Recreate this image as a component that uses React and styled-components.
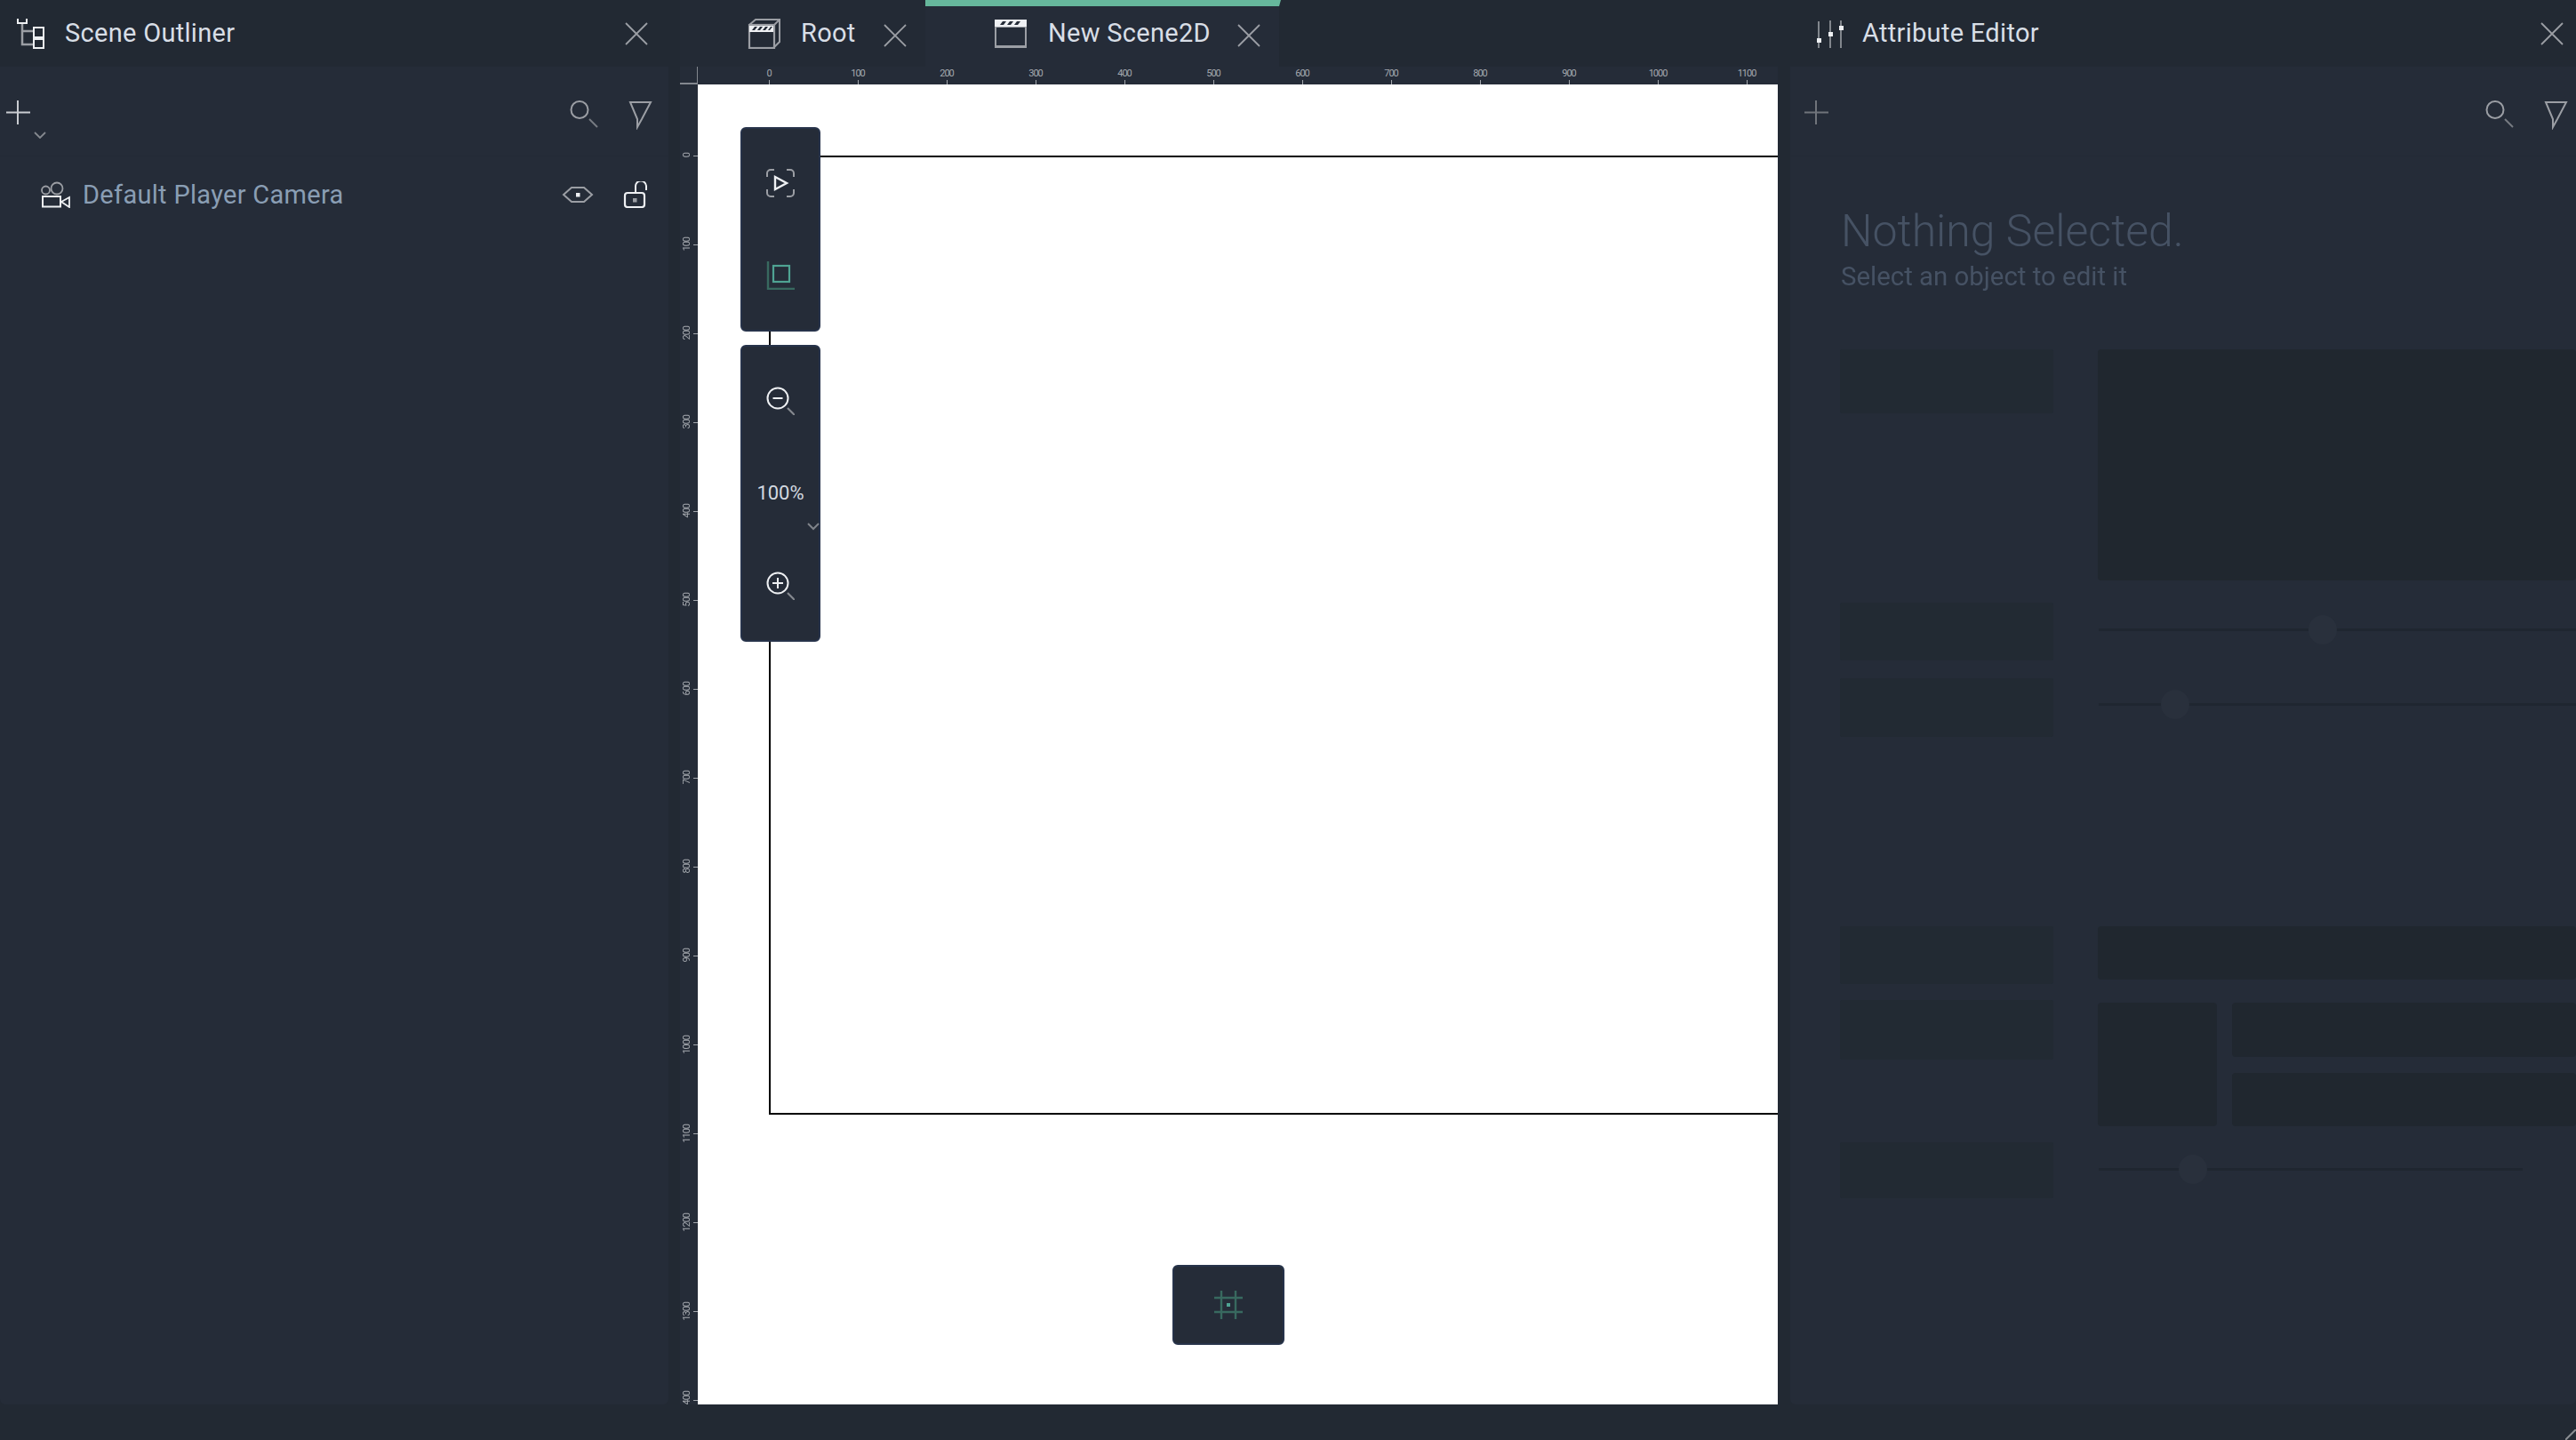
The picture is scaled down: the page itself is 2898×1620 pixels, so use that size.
import React from "react";
import styled, { createGlobalStyle } from "styled-components";

const Global = createGlobalStyle`
  html, body { margin: 0; padding: 0; width: 2898px; height: 1620px; overflow: hidden; background: #222933; }
  * { box-sizing: border-box; }
  body { font-family: Roboto, "Liberation Sans", sans-serif; }
`;

const Page = styled.div`
  width: 2898px;
  height: 1620px;
  display: flex;
  flex-direction: column;
  background: #222933;
`;
const Main = styled.div`
  height: 1580px;
  display: flex;
  gap: 0;
`;
const SidePanel = styled.section`
  width: ${(p) => p.$width}px;
  margin-right: ${(p) => p.$after || 0}px;
  flex: none;
  display: flex;
  flex-direction: column;
  overflow: hidden;
`;
const PanelHeader = styled.header`
  height: 75px;
  flex: none;
  display: flex;
  align-items: center;
  padding-left: ${(p) => p.$left}px;
  padding-right: ${(p) => p.$right}px;
  background: #222933;
`;
const PanelTitle = styled.h2`
  margin: 0 0 0 ${(p) => p.$gap}px;
  font: 400 29px/33px Roboto, sans-serif;
  letter-spacing: 0.3px;
  color: #d8dee6;
  position: relative;
  top: 0;
`;
const PanelBody = styled.div`
  flex: 1;
  display: flex;
  flex-direction: column;
  background: #252c38;
  border-radius: 0 0 6px 6px;
  overflow: hidden;
`;
const Toolbar = styled.div`
  height: 101px;
  flex: none;
  display: flex;
  align-items: flex-start;
  padding: 37px ${(p) => p.$right}px 0 ${(p) => p.$left}px;
  border-bottom: 1px solid #232a35;
`;
const ToolbarRight = styled.div`
  margin-left: auto;
  display: flex;
  gap: 32px;
`;
const Glyph = styled.svg`
  display: block;
  flex: none;
  fill: none;
`;
const CloseGlyph = styled(Glyph)`
  margin-left: auto;
  position: relative;
  top: ${(p) => p.$top || 0}px;
`;
const OutlinerRow = styled.div`
  display: flex;
  align-items: center;
  height: 30px;
  margin-top: 28px;
  padding: 0 22px 0 46px;
`;
const RowLabel = styled.span`
  margin-left: 13px;
  font: 400 29px/30px Roboto, sans-serif;
  letter-spacing: 0.3px;
  color: #8a9eb4;
`;
const RowActions = styled.div`
  margin-left: auto;
  display: flex;
  align-items: center;
  gap: 32px;
`;

const CenterColumn = styled.section`
  width: 1235px;
  margin-left: 13px;
  margin-right: 14px;
  flex: none;
  display: flex;
  flex-direction: column;
`;
const TabStrip = styled.nav`
  height: 75px;
  flex: none;
  display: flex;
`;
const Tab = styled.div`
  position: relative;
  width: ${(p) => p.$width}px;
  display: flex;
  align-items: center;
  padding: 0 21px 0 ${(p) => p.$left}px;
  background: ${(p) => (p.$active ? "#252c38" : "#232a35")};
`;
const TabMarker = styled.span`
  position: absolute;
  left: 0;
  top: 0;
  width: 400px;
  height: 7px;
  background: #66b79c;
  clip-path: polygon(0 0, 100% 0, calc(100% - 2px) 100%, 0 100%);
`;
const TabLabel = styled.span`
  margin-left: ${(p) => p.$gap}px;
  font: 400 29px/33px Roboto, sans-serif;
  letter-spacing: 0.3px;
  color: #d8dee6;
`;
const RulerTopRow = styled.div`
  height: 20px;
  flex: none;
  display: flex;
`;
const RulerCorner = styled.div`
  width: 20px;
  height: 20px;
  flex: none;
  background: #252c38;
  border-right: 1px solid #83878f;
  border-bottom: 2px solid #83878f;
`;
const HorizontalRuler = styled.div`
  flex: 1;
  display: flex;
  padding-left: 30px;
  overflow: hidden;
  background: #252c38;
`;
const HCell = styled.div`
  width: 100px;
  height: 20px;
  flex: none;
  display: flex;
  flex-direction: column;
  align-items: center;
`;
const RulerText = styled.span`
  font: 400 11px/15px Roboto, sans-serif;
  letter-spacing: -1px;
  color: #a4a8ae;
  white-space: nowrap;
`;
const HTick = styled.i`
  display: block;
  width: 1px;
  height: 5px;
  background: #a4a8ae;
`;
const Stage = styled.div`
  flex: 1;
  min-height: 0;
  display: flex;
`;
const VerticalRuler = styled.div`
  width: 20px;
  flex: none;
  display: flex;
  flex-direction: column;
  padding-top: 30px;
  overflow: hidden;
  background: #252c38;
`;
const VCell = styled.div`
  height: 100px;
  width: 20px;
  flex: none;
  display: flex;
  align-items: center;
`;
const VText = styled(RulerText)`
  width: 15px;
  display: flex;
  justify-content: center;
  writing-mode: vertical-rl;
  transform: rotate(180deg);
`;
const VTick = styled.i`
  display: block;
  width: 5px;
  height: 1px;
  background: #a4a8ae;
`;
const Canvas = styled.div`
  position: relative;
  flex: 1;
  background: #fff;
  overflow: hidden;
`;
const SceneFrame = styled.div`
  position: absolute;
  left: 80px;
  top: 80px;
  width: 1400px;
  height: 1079px;
  border: 2px solid #000;
`;
const ToolStack = styled.div`
  position: absolute;
  left: 48px;
  top: 48px;
  display: flex;
  flex-direction: column;
  gap: 15px;
`;
const FloatingBar = styled.div`
  width: 90px;
  padding: 9px 0;
  display: flex;
  flex-direction: column;
  background: #252c38;
  border: 2px solid #27334a;
  border-radius: 6px;
`;
const ToolButton = styled.div`
  position: relative;
  height: 104px;
  display: flex;
  align-items: center;
  justify-content: center;
`;
const ZoomValue = styled.span`
  font: 400 22px/26px Roboto, sans-serif;
  color: #d3d9e0;
`;
const ZoomCaret = styled(Glyph)`
  position: absolute;
  left: 73px;
  top: 85px;
`;
const GridButton = styled.div`
  position: absolute;
  left: 534px;
  top: 1328px;
  width: 126px;
  height: 90px;
  display: flex;
  align-items: center;
  justify-content: center;
  background: #252c38;
  border: 2px solid #27334a;
  border-radius: 6px;
`;

const FadedBody = styled.div`
  flex: 1;
  padding-left: 56px;
  filter: blur(0.6px);
`;
const EmptyBlock = styled.div`
  height: 217px;
  padding: 56px 0 0 1px;
`;
const EmptyTitle = styled.div`
  font: 300 50px/56px Roboto, sans-serif;
  color: #465264;
`;
const EmptySub = styled.div`
  margin-top: 6px;
  font: 400 29.4px/34px Roboto, sans-serif;
  color: #465264;
`;
const SkeletonRow = styled.div`
  display: grid;
  grid-template-columns: 240px 538px;
  column-gap: 50px;
  align-items: start;
  margin-top: ${(p) => p.$top || 0}px;
`;
const SkeletonLabel = styled.div`
  height: ${(p) => p.$height}px;
  background: #222a33;
  border-radius: 2px;
`;
const SkeletonBlock = styled.div`
  width: ${(p) => p.$width || "auto"};
  height: ${(p) => p.$height}px;
  background: #20272f;
  border-radius: 4px;
`;
const SliderTrack = styled.div`
  position: relative;
  width: ${(p) => p.$width}px;
  height: 3px;
  margin: ${(p) => p.$top}px 0 0 1px;
  background: #1f2630;
`;
const SliderThumb = styled.div`
  position: absolute;
  left: ${(p) => p.$left}px;
  top: -15px;
  width: 32px;
  height: 33px;
  border-radius: 50%;
  background: #29303c;
`;
const MediaGroup = styled.div`
  display: flex;
  gap: 17px;
  margin-top: 3px;
`;
const MediaBars = styled.div`
  flex: 1;
  display: flex;
  flex-direction: column;
  gap: 18px;
`;
const Footer = styled.footer`
  position: relative;
  height: 40px;
  background: #222933;
`;
const Grip = styled(Glyph)`
  position: absolute;
  right: 0;
  bottom: 0;
`;

const GRAY = "#9b9ea4";
const WHITE = "#eef0f3";

const Close = ({ top }) => (
  <CloseGlyph $top={top} width="26" height="26" viewBox="0 0 26 26">
    <path d="M1 1 25 25M25 1 1 25" stroke={GRAY} strokeWidth="1.8" />
  </CloseGlyph>
);
const OutlinerIcon = () => (
  <Glyph width="32" height="34" viewBox="0 0 32 34">
    <path d="M1 0v5h10V0" stroke={WHITE} strokeWidth="2" />
    <path d="M6 6v23h12M6 14h12" stroke={GRAY} strokeWidth="2.5" />
    <rect x="19" y="10" width="11" height="11" stroke={WHITE} strokeWidth="2" />
    <rect x="19" y="23" width="11" height="10" stroke={WHITE} strokeWidth="2" />
  </Glyph>
);
const SlidersIcon = () => (
  <Glyph width="36" height="34" viewBox="0 0 36 34">
    <path d="M5 3v30M18 2v31M30 2v31" stroke={GRAY} strokeWidth="1.6" />
    <rect x="3" y="22" width="5" height="5" fill={WHITE} />
    <rect x="16" y="15" width="5" height="5" fill={WHITE} />
    <rect x="28" y="8" width="5" height="5" fill={WHITE} />
  </Glyph>
);
const Plus = ({ color, caret }) => (
  <Glyph width="46" height="44" viewBox="0 0 46 44">
    <path d="M14 1v27M1 14.5h27" stroke={color} strokeWidth="2" />
    {caret && <path d="M33 37l6 6 6-6" stroke="#85898f" strokeWidth="1.8" />}
  </Glyph>
);
const Search = () => (
  <Glyph width="34" height="33" viewBox="0 0 34 33">
    <circle cx="12" cy="11.5" r="9.5" stroke={GRAY} strokeWidth="2" />
    <path d="M23 22l9 9" stroke="#777b82" strokeWidth="2" />
  </Glyph>
);
const Filter = () => (
  <Glyph width="30" height="34" viewBox="0 0 30 34">
    <path d="M3 3h23l-10 19-5 9V22z" stroke={GRAY} strokeWidth="2" />
  </Glyph>
);
const CameraIcon = () => (
  <Glyph width="34" height="30" viewBox="0 0 34 30">
    <circle cx="5.5" cy="10" r="4.5" stroke={GRAY} strokeWidth="1.8" />
    <circle cx="18" cy="8" r="6.5" stroke={GRAY} strokeWidth="1.8" />
    <rect x="2" y="17" width="20" height="11.5" stroke={WHITE} strokeWidth="2" />
    <path d="M23 23l9-5v11z" stroke={WHITE} strokeWidth="1.8" />
  </Glyph>
);
const EyeIcon = () => (
  <Glyph width="36" height="22" viewBox="0 0 36 22">
    <path d="M2 11l9-8h14l9 8-9 8H11z" stroke={GRAY} strokeWidth="2" />
    <rect x="16" y="9" width="4.5" height="4.5" fill={WHITE} />
  </Glyph>
);
const LockIcon = () => (
  <Glyph width="30" height="30" viewBox="0 0 30 30">
    <rect x="3" y="13" width="22" height="16" rx="3" stroke={WHITE} strokeWidth="2.2" />
    <rect x="12" y="19" width="4.5" height="4.5" fill={GRAY} />
    <path d="M15 12V6a6 6 0 0 1 12-1v5" stroke={WHITE} strokeWidth="2" />
  </Glyph>
);
const RootClapper = () => (
  <Glyph width="38" height="34" viewBox="0 0 38 34">
    <path d="M2 7l7-6h27v25l-7 7" stroke={GRAY} strokeWidth="2" />
    <rect x="2" y="7" width="28" height="26" stroke={GRAY} strokeWidth="2.2" />
    <path d="M30 7l6-6" stroke={GRAY} strokeWidth="2" />
    <rect x="2" y="8" width="27" height="7" fill={WHITE} />
    <path d="M5 13l3-4h3l-3 4zM11 13l3-4h3l-3 4zM17 13l3-4h3l-3 4zM23 13l3-4h2l-3 4z" fill="#252c38" />
  </Glyph>
);
const SceneClapper = () => (
  <Glyph width="36" height="34" viewBox="0 0 36 34">
    <rect x="1" y="9" width="34" height="23" stroke={GRAY} strokeWidth="2" />
    <path d="M1 31.5h34" stroke={GRAY} strokeWidth="3" />
    <rect x="0" y="1" width="36" height="8" fill={WHITE} />
    <path d="M6 7l3-4h4l-3 4zM14 7l3-4h4l-3 4zM22 7l3-4h4l-3 4z" fill="#252c38" />
  </Glyph>
);
const PlayFocus = () => (
  <Glyph width="32" height="32" viewBox="0 0 32 32">
    <path d="M1 9V5a4 4 0 0 1 4-4h4M23 1h4a4 4 0 0 1 4 4v4M31 23v4a4 4 0 0 1-4 4h-4M9 31H5a4 4 0 0 1-4-4v-4" stroke={GRAY} strokeWidth="2" />
    <path d="M10 9v14l13-7z" stroke={WHITE} strokeWidth="2.4" />
  </Glyph>
);
const FrameIcon = () => (
  <Glyph width="32" height="32" viewBox="0 0 32 32">
    <path d="M2 0v31h32" stroke="#38695f" strokeWidth="2.4" />
    <rect x="8" y="5" width="18" height="18" stroke="#4fa393" strokeWidth="2.2" />
  </Glyph>
);
const ZoomIcon = ({ plus }) => (
  <Glyph width="32" height="32" viewBox="0 0 32 32">
    <circle cx="13" cy="13" r="11.5" stroke={WHITE} strokeWidth="2" />
    <path d={plus ? "M7 13h12M13 7v12" : "M7.5 13h11"} stroke={WHITE} strokeWidth="2" />
    <path d="M24 24l8 8" stroke="#85898f" strokeWidth="2.2" />
  </Glyph>
);
const GridIcon = () => (
  <Glyph width="32" height="32" viewBox="0 0 32 32">
    <path d="M8 0v32M24 0v32M0 8h32M0 24h32" stroke="#38695f" strokeWidth="2.4" />
    <rect x="14" y="14" width="4" height="4" fill="#4fa393" />
  </Glyph>
);

const hMarks = Array.from({ length: 12 }, (_, i) => i * 100);
const vMarks = Array.from({ length: 15 }, (_, i) => i * 100);

export default function App() {
  return (
    <Page>
      <Global />
      <Main>
        <SidePanel $width={752}>
          <PanelHeader $left={19} $right={23}>
            <OutlinerIcon />
            <PanelTitle $gap={22}>Scene Outliner</PanelTitle>
            <Close />
          </PanelHeader>
          <PanelBody>
            <Toolbar $left={6} $right={16}>
              <Plus color="#c9ccd1" caret />
              <ToolbarRight>
                <Search />
                <Filter />
              </ToolbarRight>
            </Toolbar>
            <OutlinerRow>
              <CameraIcon />
              <RowLabel>Default Player Camera</RowLabel>
              <RowActions>
                <EyeIcon />
                <LockIcon />
              </RowActions>
            </OutlinerRow>
          </PanelBody>
        </SidePanel>

        <CenterColumn>
          <TabStrip>
            <Tab $width={276} $left={76}>
              <RootClapper />
              <TabLabel $gap={22}>Root</TabLabel>
              <Close top={2} />
            </Tab>
            <Tab $width={398} $left={78} $active>
              <TabMarker />
              <SceneClapper />
              <TabLabel $gap={24}>New Scene2D</TabLabel>
              <Close top={2} />
            </Tab>
          </TabStrip>
          <RulerTopRow>
            <RulerCorner />
            <HorizontalRuler>
              {hMarks.map((m) => (
                <HCell key={m}>
                  <RulerText>{m}</RulerText>
                  <HTick />
                </HCell>
              ))}
            </HorizontalRuler>
          </RulerTopRow>
          <Stage>
            <VerticalRuler>
              {vMarks.map((m) => (
                <VCell key={m}>
                  <VText>{m}</VText>
                  <VTick />
                </VCell>
              ))}
            </VerticalRuler>
            <Canvas>
              <SceneFrame />
              <ToolStack>
                <FloatingBar>
                  <ToolButton><PlayFocus /></ToolButton>
                  <ToolButton><FrameIcon /></ToolButton>
                </FloatingBar>
                <FloatingBar>
                  <ToolButton><ZoomIcon /></ToolButton>
                  <ToolButton>
                    <ZoomValue>100%</ZoomValue>
                    <ZoomCaret width="14" height="9" viewBox="0 0 14 9">
                      <path d="M1 1l6 6 6-6" stroke="#7f838a" strokeWidth="2" />
                    </ZoomCaret>
                  </ToolButton>
                  <ToolButton><ZoomIcon plus /></ToolButton>
                </FloatingBar>
              </ToolStack>
              <GridButton><GridIcon /></GridButton>
            </Canvas>
          </Stage>
        </CenterColumn>

        <SidePanel $width={884}>
          <PanelHeader $left={27} $right={14}>
            <SlidersIcon />
            <PanelTitle $gap={18}>Attribute Editor</PanelTitle>
            <Close />
          </PanelHeader>
          <PanelBody>
            <Toolbar $left={15} $right={7}>
              <Plus color="#70747b" />
              <ToolbarRight>
                <Search />
                <Filter />
              </ToolbarRight>
            </Toolbar>
            <FadedBody>
              <EmptyBlock>
                <EmptyTitle>Nothing Selected.</EmptyTitle>
                <EmptySub>Select an object to edit it</EmptySub>
              </EmptyBlock>
              <SkeletonRow>
                <SkeletonLabel $height={72} />
                <SkeletonBlock $height={260} />
              </SkeletonRow>
              <SkeletonRow $top={25}>
                <SkeletonLabel $height={65} />
                <SliderTrack $width={537} $top={29}><SliderThumb $left={236} /></SliderTrack>
              </SkeletonRow>
              <SkeletonRow $top={20}>
                <SkeletonLabel $height={66} />
                <SliderTrack $width={537} $top={28}><SliderThumb $left={70} /></SliderTrack>
              </SkeletonRow>
              <SkeletonRow $top={213}>
                <SkeletonLabel $height={65} />
                <SkeletonBlock $height={60} />
              </SkeletonRow>
              <SkeletonRow $top={18}>
                <SkeletonLabel $height={67} />
                <MediaGroup>
                  <SkeletonBlock $width="134px" $height={139} />
                  <MediaBars>
                    <SkeletonBlock $height={61} />
                    <SkeletonBlock $height={60} />
                  </MediaBars>
                </MediaGroup>
              </SkeletonRow>
              <SkeletonRow $top={18}>
                <SkeletonLabel $height={63} />
                <SliderTrack $width={477} $top={29}><SliderThumb $left={90} /></SliderTrack>
              </SkeletonRow>
            </FadedBody>
          </PanelBody>
        </SidePanel>
      </Main>
      <Footer>
        <Grip width="12" height="12" viewBox="0 0 12 12">
          <path d="M0 12 12 0" stroke="#8a8d92" strokeWidth="2" />
        </Grip>
      </Footer>
    </Page>
  );
}
